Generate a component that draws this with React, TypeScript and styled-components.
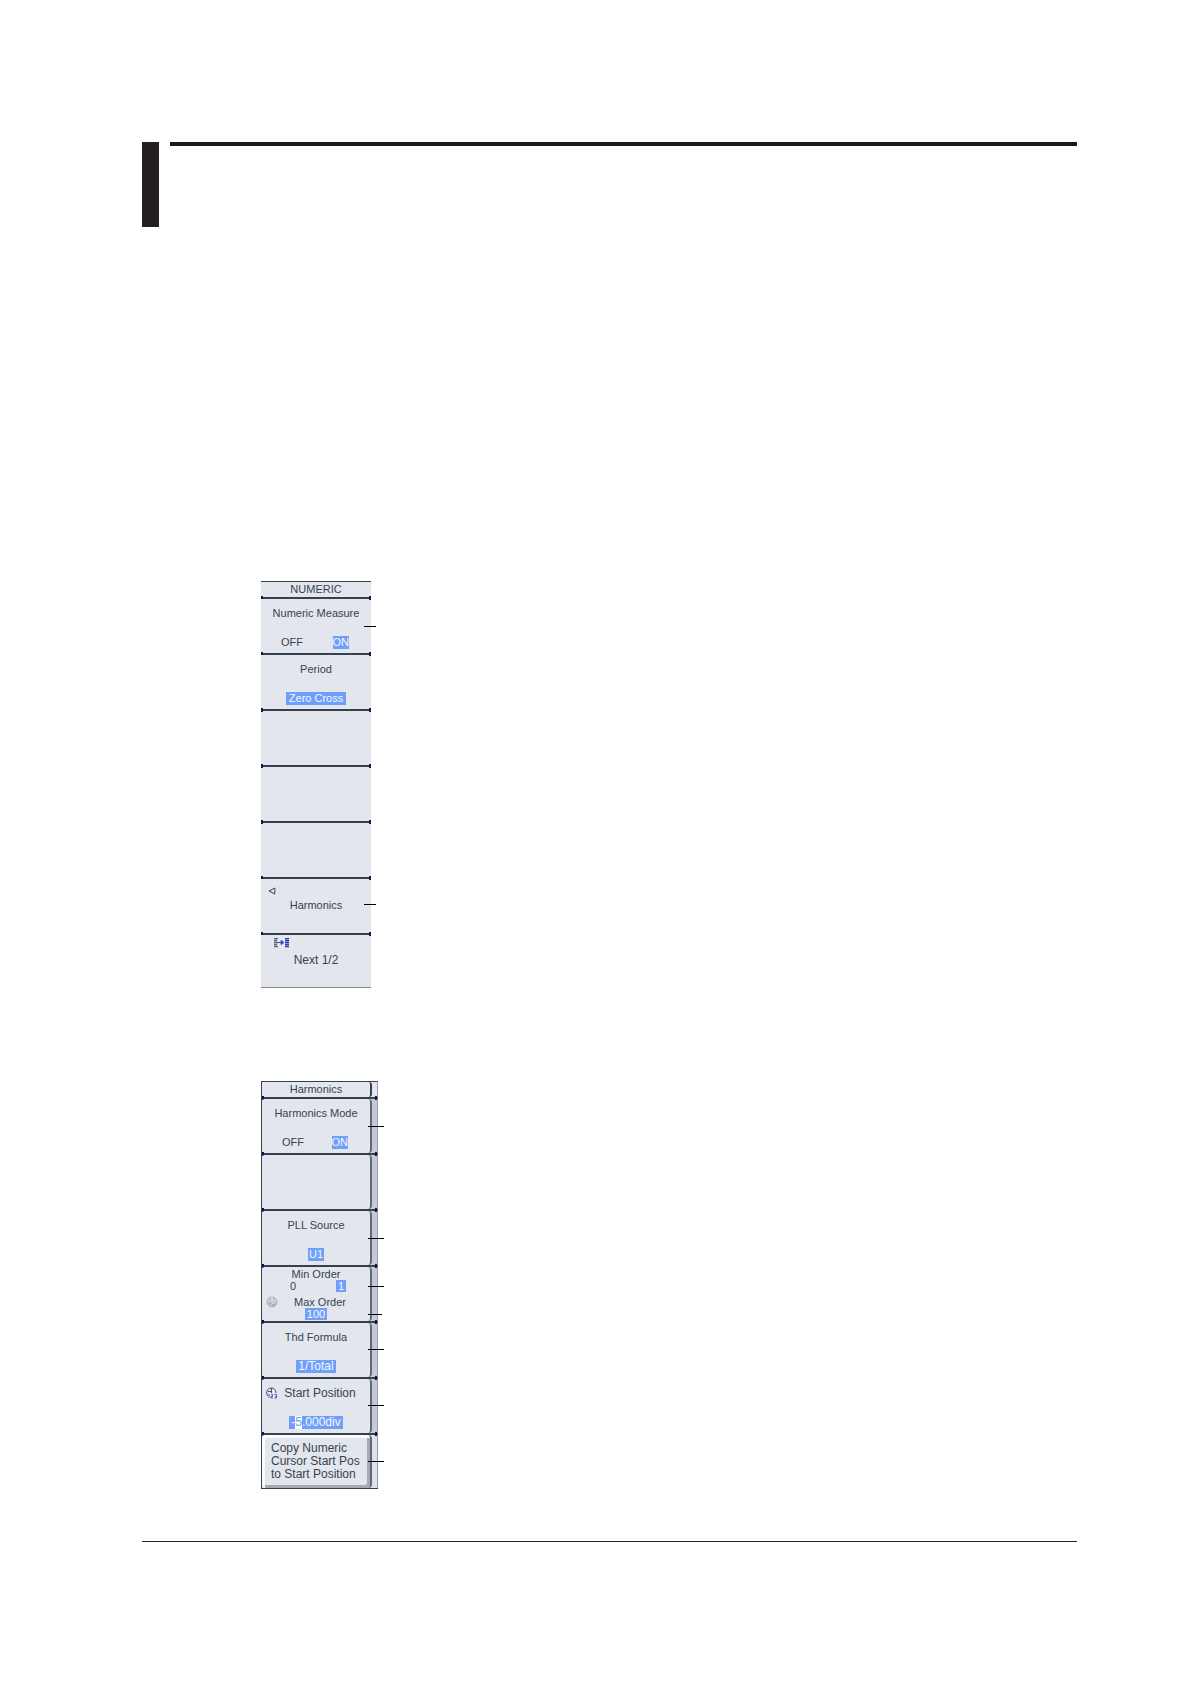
import React from "react";
import styled, { createGlobalStyle, css } from "styled-components";

const ink = "#34434f";
const line = "#33424f";
const face = "#e4e6ee";
const rail = "#c6c8d8";
const highlight = "#709ffa";
const corner = "#14144a";

const GlobalStyle = createGlobalStyle`
  *, *::before, *::after { box-sizing: border-box; }
  body { margin: 0; background: #fff; }
`;

const Page = styled.div`
  padding: 142px 114px 142px 142px;
  font-family: "Liberation Sans", Arial, sans-serif;
  font-size: 11px;
  line-height: 13px;
  color: ${ink};
`;

const Masthead = styled.header`
  display: flex;
  align-items: flex-start;
  gap: 11px;
`;

const ChapterMark = styled.div`
  width: 17px;
  height: 85px;
  background: #231f20;
`;

const TopRule = styled.div`
  flex: 1;
  height: 4px;
  background: #1b191a;
`;

const Figures = styled.main`
  display: flex;
  flex-direction: column;
  align-items: flex-start;
  gap: 93px;
  padding: 354px 0 52px 119px;
`;

const FootRule = styled.footer`
  height: 1px;
  background: #222;
`;

const Menu = styled.section<{ $railed?: boolean }>`
  width: ${(p) => (p.$railed ? 117 : 110)}px;
  background: ${(p) => (p.$railed ? rail : face)};
  border-bottom: 1px solid ${(p) => (p.$railed ? line : "#85888f")};
`;

const Row = styled.div<{ $railed?: boolean }>`
  position: relative;
  display: flex;
  height: 56px;
  border-top: 2px solid ${line};
  ${(p) =>
    p.$railed &&
    css`
      border-right: 1px solid #9a9cae;
      border-left: 1px solid ${line};
    `}
  &:last-child {
    height: ${(p) => (p.$railed ? 55 : 54)}px;
    background: #dfe0e8;
  }
  &::before,
  &::after {
    content: "";
    position: absolute;
    top: -3px;
    left: 0;
    width: 2px;
    height: 4px;
    background: ${corner};
  }
  &::after {
    left: auto;
    right: 0;
  }
`;

const TitleRow = styled.div<{ $railed?: boolean }>`
  display: flex;
  height: 16px;
  border-top: 1px solid ${line};
  ${(p) =>
    p.$railed &&
    css`
      background: ${face};
      border-right: 1px solid #9a9cae;
      border-left: 1px solid ${line};
    `}
`;

const Title = styled.h2<{ $railed?: boolean }>`
  width: ${(p) => (p.$railed ? "110px" : "100%")};
  margin: 0;
  padding-top: 1px;
  text-align: center;
  font-size: 11px;
  font-weight: 400;
  border-radius: 3px;
  border-right: ${(p) => (p.$railed ? `2px solid ${line}` : "0")};
`;

const Softkey = styled.button<{
  $railed?: boolean;
  $dense?: boolean;
  $middle?: boolean;
  $raised?: boolean;
}>`
  position: relative;
  display: flex;
  flex-direction: column;
  justify-content: ${(p) => (p.$middle ? "center" : "space-between")};
  align-items: ${(p) => (p.$raised ? "flex-start" : "stretch")};
  width: ${(p) => (p.$railed ? "110px" : "100%")};
  padding: ${(p) =>
    p.$dense ? "1px 0" : p.$raised ? "0 0 0 9px" : p.$middle ? "4px 0 6px" : "8px 0 4px"};
  border: 0;
  border-right: ${(p) => (p.$railed ? "2px solid #626775" : "0")};
  border-radius: ${(p) => (p.$railed ? "3px 4px 4px 3px" : "0")};
  background: ${face};
  color: inherit;
  font: inherit;
  line-height: ${(p) => (p.$dense ? "12px" : "13px")};
  text-align: ${(p) => (p.$raised ? "left" : "center")};
  white-space: pre;
  cursor: pointer;
  ${(p) =>
    p.$raised &&
    css`
      box-shadow: inset 3px 3px 0 #fafbfd, inset -3px -3px 0 #a6a9b6;
    `}
`;

const Label = styled.span<{ $shift?: boolean; $large?: boolean }>`
  display: block;
  padding-left: ${(p) => (p.$shift ? "8px" : "0")};
  font-size: ${(p) => (p.$large ? "12px" : "11px")};
`;

const Choice = styled.span`
  display: flex;
  justify-content: space-between;
  padding: 0 22px 0 20px;
`;

const OrderChoice = styled(Choice)`
  padding: 0 24px 0 28px;
`;

const ValueLine = styled.span`
  display: block;
`;

const Mark = styled.span<{ $pad?: number; $large?: boolean }>`
  display: inline-block;
  padding: 0 ${(p) => p.$pad ?? 1}px;
  background: ${highlight};
  color: #f4f8ff;
  font-size: ${(p) => (p.$large ? "12px" : "11px")};
`;

const Digit = styled.span`
  display: inline-block;
  background: #fbfdff;
  color: ${highlight};
`;

const Pair = styled.span`
  display: block;
`;

const Leader = styled.span<{ $y: number; $railed?: boolean; $short?: boolean }>`
  position: absolute;
  top: ${(p) => p.$y}px;
  left: ${(p) => (p.$railed ? 106 : 103)}px;
  width: ${(p) => (p.$short ? 14 : p.$railed ? 16 : 12)}px;
  height: 1px;
  background: #000;
  z-index: 1;
`;

const Badge = styled.svg<{ $x: number; $y: number }>`
  position: absolute;
  left: ${(p) => p.$x}px;
  top: ${(p) => p.$y}px;
`;

const BackIcon = () => (
  <Badge $x={7} $y={8} width="8" height="8" viewBox="0 0 8 8" aria-hidden="true">
    <path d="M6.8 1v6L1 4z" fill="none" stroke={ink} strokeWidth="1" />
  </Badge>
);

const PageIcon = () => (
  <Badge $x={13} $y={3} width="15" height="10" viewBox="0 0 15 10" aria-hidden="true">
    <path d="M0 .5h4M0 2.500h3M0 4.500h4M0 6.500h3M0 8.500h4" stroke="#5d6880" strokeWidth="1.5" />
    <path d="M11 .5h4M11 2.500h4M11 4.500h4M11 6.500h4M11 8.500h4" stroke="#2a3da8" strokeWidth="1.6" />
    <path d="M4 4.500h5M7 2.500L10 4.500 7 6.500z" stroke="#3450c8" fill="#3450c8" strokeWidth="1" />
  </Badge>
);

const DialIcon = ({ active }: { active?: boolean }) => (
  <Badge $x={4} $y={active ? 8 : 29} width="12" height="12" viewBox="0 0 12 12" aria-hidden="true">
    {active ? (
      <>
        <path d="M2 9A4.700 4.700 0 1 1 10 6" fill="none" stroke="#4a5362" />
        <path d="M5.500 1v5M2 4.500h3" stroke="#4a5362" fill="none" />
        <path
          d="M3 7v4M5 7.500h1.500v2H5v1.500h2M8.500 7.500h2v3.500H8.500M9 9.500h1.500"
          stroke="#4340b0"
          fill="none"
          strokeWidth=".8"
        />
      </>
    ) : (
      <>
        <circle cx="6" cy="6" r="5" fill="#c1c2c8" stroke="#b2b4bb" />
        <path d="M6 1v5l4 4M3 4v4M8 3l2 3" stroke="#e6e7ec" fill="none" />
        <path d="M2 7h3M6 9h4" stroke="#9698a4" fill="none" />
      </>
    )}
  </Badge>
);

const OnOff = () => (
  <Choice>
    <span>OFF</span>
    <Mark $pad={0}>ON</Mark>
  </Choice>
);

export default function App() {
  return (
    <Page>
      <GlobalStyle />
      <Masthead>
        <ChapterMark />
        <TopRule />
      </Masthead>
      <Figures>
        <Menu>
          <TitleRow>
            <Title>NUMERIC</Title>
          </TitleRow>
          <Row>
            <Softkey>
              <Label>Numeric Measure</Label>
              <OnOff />
            </Softkey>
            <Leader $y={27} />
          </Row>
          <Row>
            <Softkey>
              <Label>Period</Label>
              <ValueLine>
                <Mark $pad={3}>Zero Cross</Mark>
              </ValueLine>
            </Softkey>
          </Row>
          <Row />
          <Row />
          <Row />
          <Row>
            <Softkey $middle>
              <BackIcon />
              <Label>Harmonics</Label>
            </Softkey>
            <Leader $y={25} />
          </Row>
          <Row>
            <Softkey $middle>
              <PageIcon />
              <Label $large>Next 1/2</Label>
            </Softkey>
          </Row>
        </Menu>

        <Menu $railed>
          <TitleRow $railed>
            <Title $railed>Harmonics</Title>
          </TitleRow>
          <Row $railed>
            <Softkey $railed>
              <Label>Harmonics Mode</Label>
              <OnOff />
            </Softkey>
            <Leader $railed $y={27} />
          </Row>
          <Row $railed>
            <Softkey $railed aria-label="Unassigned" />
          </Row>
          <Row $railed>
            <Softkey $railed>
              <Label>PLL Source</Label>
              <ValueLine>
                <Mark>U1</Mark>
              </ValueLine>
            </Softkey>
            <Leader $railed $y={27} />
          </Row>
          <Row $railed>
            <Softkey $railed $dense>
              <Pair>
                <Label>Min Order</Label>
                <OrderChoice>
                  <span>0</span>
                  <Mark $pad={2}>1</Mark>
                </OrderChoice>
              </Pair>
              <DialIcon />
              <Pair>
                <Label $shift>Max Order</Label>
                <ValueLine>
                  <Mark $pad={2}>100</Mark>
                </ValueLine>
              </Pair>
            </Softkey>
            <Leader $railed $y={19} />
            <Leader $railed $short $y={47} />
          </Row>
          <Row $railed>
            <Softkey $railed>
              <Label>Thd Formula</Label>
              <ValueLine>
                <Mark $pad={2} $large>1/Total</Mark>
              </ValueLine>
            </Softkey>
            <Leader $railed $y={26} />
          </Row>
          <Row $railed>
            <Softkey $railed>
              <DialIcon active />
              <Label $shift $large>Start Position</Label>
              <ValueLine>
                <Mark $pad={2} $large>
                  -<Digit>5</Digit>.000div
                </Mark>
              </ValueLine>
            </Softkey>
            <Leader $railed $y={26} />
          </Row>
          <Row $railed>
            <Softkey $railed $raised $middle>
              <Label $large>Copy Numeric</Label>
              <Label $large>Cursor Start Pos</Label>
              <Label $large>to Start Position</Label>
            </Softkey>
            <Leader $railed $y={26} />
          </Row>
        </Menu>
      </Figures>
      <FootRule />
    </Page>
  );
}
